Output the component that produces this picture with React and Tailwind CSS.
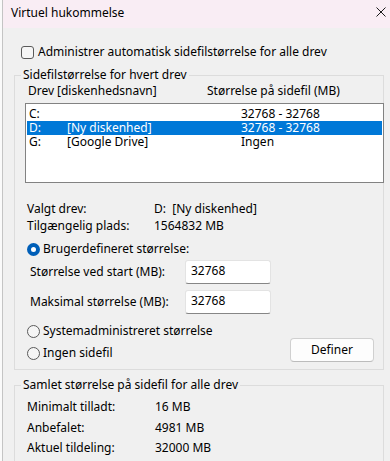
import { useState } from 'react';

const drives = [
  { letter: 'C:', name: '', size: '32768 - 32768' },
  { letter: 'D:', name: '[Ny diskenhed]', size: '32768 - 32768' },
  { letter: 'G:', name: '[Google Drive]', size: 'Ingen' },
];

const Radio = ({ checked, label, onClick }) => (
  <button onClick={onClick} className="flex h-[16px] items-center gap-[3px] text-left">
    {checked ? (
      <span className="flex h-[13px] w-[13px] items-center justify-center rounded-full bg-[#005fb8]">
        <span className="h-[5px] w-[5px] rounded-full bg-white" />
      </span>
    ) : (
      <span className="h-[13px] w-[13px] rounded-full border border-[#5a5a5a] bg-[#f5f5f5]" />
    )}
    <span>{label}</span>
  </button>
);

const SizeInput = ({ label, value }) => (
  <div className="flex items-center">
    <span className="mt-[-1px] w-[170px] shrink-0 pl-[15px]">{label}</span>
    <div className="h-[24px] w-[86px] rounded-[3px] border border-[#e3e3e3] border-b-[#868686] bg-white pl-[5px] pt-[1px] leading-[18px]">
      {value}
    </div>
  </div>
);

const App = () => {
  const [selected, setSelected] = useState(1);
  const [mode, setMode] = useState('custom');

  return (
    <div className="flex h-[461px] w-[390px] overflow-hidden bg-[#fafafa] text-[12px] leading-[16px] text-black" style={{ fontFamily: '"Noto Sans", "Segoe UI", sans-serif' }}>
      <div className="ml-[2px] flex flex-1 flex-col border-l border-[#c4c4c4] bg-[#f0f0f0]">
        <div className="flex h-[28px] shrink-0 items-center justify-between bg-[#f9edf4] pl-[8px] pr-[4px]">
          <span className="mt-[-2px]">Virtuel hukommelse</span>
          <svg width="10" height="10" viewBox="0 0 10 10" className="mt-[-4px]">
            <path d="M0.5 0.5 L9.5 9.5 M9.5 0.5 L0.5 9.5" stroke="#1a1a1a" strokeWidth="1" fill="none" />
          </svg>
        </div>

        <label className="mt-[16px] flex h-[16px] items-center gap-[4px] pl-[18px]">
          <span className="h-[13px] w-[13px] rounded-[3px] border border-[#5a5a5a] bg-[#f6f6f6]" />
          <span>Administrer automatisk sidefilstørrelse for alle drev</span>
        </label>

        <fieldset className="mt-[7px] ml-[11px] w-[370px] border border-[#dcdcdc] pb-[8px]">
          <legend className="ml-[6px] px-[2px] leading-[16px]">Sidefilstørrelse for hvert drev</legend>

          <div className="flex h-[15px] items-center pl-[13px]">
            <span className="w-[29px] shrink-0 whitespace-nowrap">Drev</span>
            <span className="w-[150px] shrink-0">[diskenhedsnavn]</span>
            <span>Størrelse på sidefil (MB)</span>
          </div>

          <div className="mt-[5px] ml-[10px] mr-[-1px] h-[80px] border border-[#828282] bg-white px-[1px] pt-[3px]">
            {drives.map((d, i) => (
              <div
                key={d.letter}
                onClick={() => setSelected(i)}
                className={`flex h-[14px] items-center pl-[2px] leading-[14px] ${i === selected ? 'bg-[#0078d7] text-white' : ''}`}
              >
                <span className="w-[38px] shrink-0">{d.letter}</span>
                <span className="w-[174px] shrink-0">{d.name}</span>
                <span>{d.size}</span>
              </div>
            ))}
          </div>

          <div className="mt-[17px] pl-[12px]">
            <div className="flex h-[17px] items-center">
              <span className="w-[127px] shrink-0">Valgt drev:</span>
              <span>
                {drives[selected].letter}&nbsp;&nbsp;{drives[selected].name}
              </span>
            </div>
            <div className="flex h-[17px] items-center">
              <span className="w-[127px] shrink-0">Tilgængelig plads:</span>
              <span>1564832 MB</span>
            </div>
          </div>

          <div className="mt-[7px] pl-[12px]">
            <Radio checked={mode === 'custom'} label="Brugerdefineret størrelse:" onClick={() => setMode('custom')} />
          </div>

          <div className="mt-[3px] flex flex-col gap-[6px]">
            <SizeInput label="Størrelse ved start (MB):" value="32768" />
            <SizeInput label="Maksimal størrelse (MB):" value="32768" />
          </div>

          <div className="mt-[9px] flex items-end justify-between pl-[12px] pr-[9px]">
            <div className="flex flex-col gap-[6px]">
              <Radio checked={mode === 'system'} label="Systemadministreret størrelse" onClick={() => setMode('system')} />
              <Radio checked={mode === 'none'} label="Ingen sidefil" onClick={() => setMode('none')} />
            </div>
            <button className="mb-[-1px] h-[24px] w-[84px] rounded-[4px] border border-[#d0d0d0] border-b-[#bcbcbc] bg-[#fdfdfd]">
              Definer
            </button>
          </div>
        </fieldset>

        <fieldset className="mt-[7px] ml-[11px] w-[370px] border border-[#dcdcdc] pb-[8px] pl-[12px]">
          <legend className="ml-[-6px] px-[2px] leading-[16px]">Samlet størrelse på sidefil for alle drev</legend>
          <div className="mt-[4px]">
            {[
              ['Minimalt tilladt:', '16 MB'],
              ['Anbefalet:', '4981 MB'],
              ['Aktuel tildeling:', '32000 MB'],
            ].map(([k, v]) => (
              <div key={k} className="flex h-[20.5px] items-center">
                <span className="w-[128px] shrink-0">{k}</span>
                <span>{v}</span>
              </div>
            ))}
          </div>
        </fieldset>
      </div>
    </div>
  );
};

export default App;
